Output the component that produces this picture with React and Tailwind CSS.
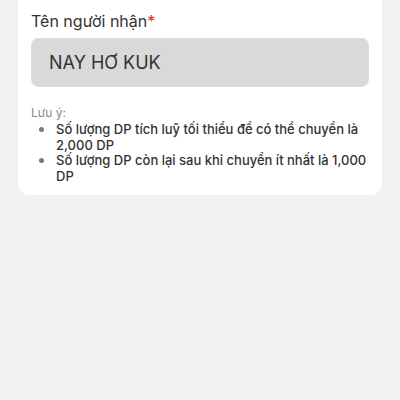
export default function App() {
  const notes = [
    "Số lượng DP tích luỹ tối thiểu để có thể chuyển là 2,000 DP",
    "Số lượng DP còn lại sau khi chuyển ít nhất là 1,000 DP",
  ];

  return (
    <div className="min-h-screen w-full overflow-hidden bg-[#f2f2f2] px-[18px]" style={{ fontFamily: "Inter, 'Noto Sans', sans-serif" }}>
      {/* card continues above the visible area */}
      <div className="-mt-5 rounded-xl bg-white px-[13px] pt-[29px] pb-[11px]">
        <label className="block text-[16px] leading-6 text-[#333333]">
          Tên người nhận<span className="text-[#d32f2f]">*</span>
        </label>
        <div className="mt-[5px] flex h-[49px] items-center rounded-lg bg-[#d9d9d9] px-[18px] text-[18px] text-[#333333]">
          NAY HƠ KUK
        </div>

        <div className="mt-[18px]">
          <p className="text-[12px] leading-[15px] text-[#8a8a8a]">Lưu ý:</p>
          <ul className="mt-[2px]">
            {notes.map((note) => (
              <li key={note} className="flex text-[13px] leading-[15.5px] font-medium text-[#333333]">
                <span className="flex h-[15.5px] w-[25px] shrink-0 items-center pl-[8px]">
                  <span className="h-[5px] w-[5px] rounded-full bg-[#7a7a7a]"></span>
                </span>
                <span>{note}</span>
              </li>
            ))}
          </ul>
        </div>
      </div>
    </div>
  );
}
